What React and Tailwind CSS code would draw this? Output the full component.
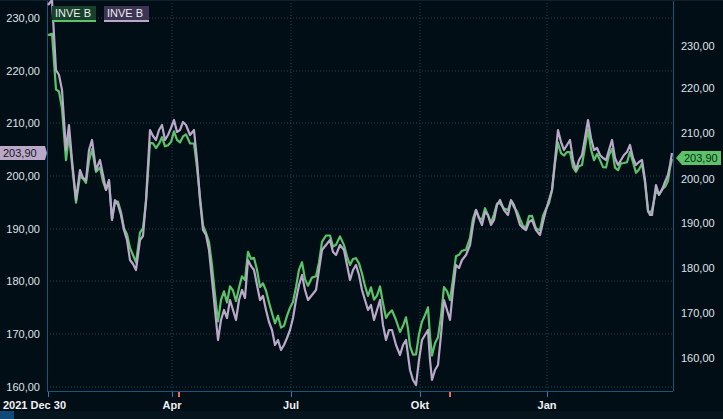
const P = [[48,5],[52,0],[56,70],[59,75],[62,90],[66,150],[69,125],[72,160],[76,200],[80,170],[83,178],[86,180],[89,150],[92,140],[96,170],[100,160],[103,175],[106,190],[109,180],[112,220],[115,200],[118,205],[121,215],[124,230],[127,240],[130,260],[133,264],[136,270],[140,240],[143,236],[146,200],[150,130],[153,136],[156,140],[159,130],[162,125],[165,140],[168,135],[171,128],[174,120],[177,132],[180,130],[183,122],[186,125],[190,135],[194,130],[197,160],[200,200],[203,230],[206,235],[209,250],[212,280],[215,310],[218,340],[221,320],[224,310],[227,318],[230,300],[233,310],[236,320],[239,300],[242,290],[245,298],[248,260],[251,266],[254,270],[257,285],[260,300],[263,296],[266,310],[269,322],[272,330],[275,345],[278,340],[281,350],[284,345],[287,338],[290,330],[293,318],[296,300],[299,285],[302,275],[305,290],[308,300],[312,295],[316,290],[319,270],[322,250],[326,245],[330,240],[333,252],[336,255],[340,245],[344,250],[347,265],[350,280],[353,270],[356,265],[359,275],[362,290],[365,300],[368,310],[371,305],[374,320],[377,310],[380,300],[383,325],[386,340],[389,330],[392,330],[396,345],[400,355],[403,345],[406,340],[408,355],[410,370],[413,380],[416,385],[419,360],[422,340],[425,335],[428,330],[430,360],[432,380],[435,370],[438,365],[441,335],[444,300],[447,310],[450,320],[453,290],[456,265],[459,268],[462,260],[466,255],[470,245],[473,225],[476,210],[479,218],[482,225],[485,212],[488,215],[491,225],[494,220],[497,205],[500,200],[504,210],[508,215],[511,200],[514,205],[517,215],[520,225],[523,228],[526,230],[529,222],[532,220],[536,230],[540,235],[543,222],[546,210],[549,200],[552,190],[555,160],[558,130],[561,142],[564,150],[567,145],[570,140],[573,160],[576,170],[579,160],[582,155],[585,138],[588,120],[591,138],[594,150],[597,148],[600,155],[603,158],[606,160],[609,150],[612,140],[615,158],[618,165],[621,160],[624,155],[627,152],[630,145],[633,158],[636,165],[639,162],[642,160],[645,180],[648,210],[650,215],[652,215],[654,200],[656,185],[659,195],[662,190],[665,182],[668,175],[670,165],[672,153]];

const purple = P.map(([x, y]) => `${x},${y}`).join(' ');
const green = P.map(([x, y], i) => `${x},${(46 + (y - 18) * 0.847 + Math.sin(i * 1.7) * 3).toFixed(1)}`).join(' ');

const leftLabels = [['230,00', 18], ['220,00', 71], ['210,00', 123], ['200,00', 176], ['190,00', 229], ['180,00', 281], ['170,00', 334], ['160,00', 387]];
const rightLabels = [['230,00', 46], ['220,00', 88], ['210,00', 133], ['200,00', 179], ['190,00', 223], ['180,00', 268], ['170,00', 313], ['160,00', 358]];
const months = [['Apr', 172], ['Jul', 291], ['Okt', 420], ['Jan', 547]];

export default function App() {
  return (
    <div className="w-[723px] h-[419px] bg-[#020e16] flex flex-col" style={{ fontFamily: '"Liberation Sans", Arial, sans-serif' }}>
      <svg width="723" height="411" className="block">
        {leftLabels.map(([t, y]) => (
          <line key={t} x1="47" x2="673" y1={y} y2={y} stroke="#1f4256" strokeDasharray="1 2" />
        ))}
        {months.map(([m, x]) => (
          <line key={m} x1={x} x2={x} y1="0" y2="391" stroke="#1f4256" strokeDasharray="1 2" />
        ))}
        <line x1="47.5" x2="47.5" y1="0" y2="391" stroke="#1c5478" />
        <line x1="673.5" x2="673.5" y1="0" y2="391" stroke="#1c5478" />
        <line x1="47" x2="673" y1="391.5" y2="391.5" stroke="#1c5478" />
        <line x1="0" x2="723" y1="0.5" y2="0.5" stroke="#0c2230" />
        <polyline points={green} fill="none" stroke="#5bc46a" strokeWidth="2.2" strokeLinejoin="round" />
        <polyline points={purple} fill="none" stroke="#b9a8c8" strokeWidth="2.2" strokeLinejoin="round" />
        {leftLabels.map(([t, y]) => (
          <text key={t} x="40" y={y + 4} textAnchor="end" fontSize="11" fill="#dde3ea">{t}</text>
        ))}
        {rightLabels.map(([t, y]) => (
          <text key={t} x="681" y={y + 4} fontSize="11" fill="#dde3ea">{t}</text>
        ))}
        <line x1="48.5" x2="48.5" y1="392" y2="397" stroke="#2e79ad" />
        {months.map(([m, x]) => (
          <g key={m}>
            <line x1={x + 0.5} x2={x + 0.5} y1="392" y2="397" stroke="#2e79ad" />
            <text x={x} y="409" textAnchor="middle" fontSize="11" fontWeight="bold" fill="#eef1f4">{m}</text>
          </g>
        ))}
        <rect x="178" y="392" width="2" height="5" fill="#f06565" />
        <rect x="449" y="392" width="2" height="5" fill="#f06565" />
        <text x="3" y="409" fontSize="11" fontWeight="bold" fill="#eef1f4">2021 Dec 30</text>
        <rect x="0" y="146" width="45" height="14" fill="#b9a8c8" />
        <text x="3" y="157" fontSize="11" fill="#1a1622">203,90</text>
        <polygon points="45,146 47,153 45,160" fill="#b9a8c8" />
        <polygon points="682,151 676,158 682,165" fill="#5bc46a" />
        <rect x="682" y="151" width="39" height="14" fill="#5bc46a" />
        <text x="684" y="162" fontSize="11" fill="#0e2a14">203,90</text>
        <rect x="52" y="6" width="44" height="15" fill="#17412a" />
        <rect x="52" y="20" width="44" height="2" fill="#5bc46a" />
        <text x="55" y="17" fontSize="11" fill="#e8eef0">INVE B</text>
        <rect x="104" y="6" width="45" height="15" fill="#3e3554" />
        <rect x="104" y="20" width="45" height="2" fill="#b9a8c8" />
        <text x="107" y="17" fontSize="11" fill="#e8eef0">INVE B</text>
      </svg>
      <div className="flex-1 bg-[#06141e] flex">
        <div className="w-[14px] bg-[#0f4a78]"></div>
      </div>
    </div>
  );
}
